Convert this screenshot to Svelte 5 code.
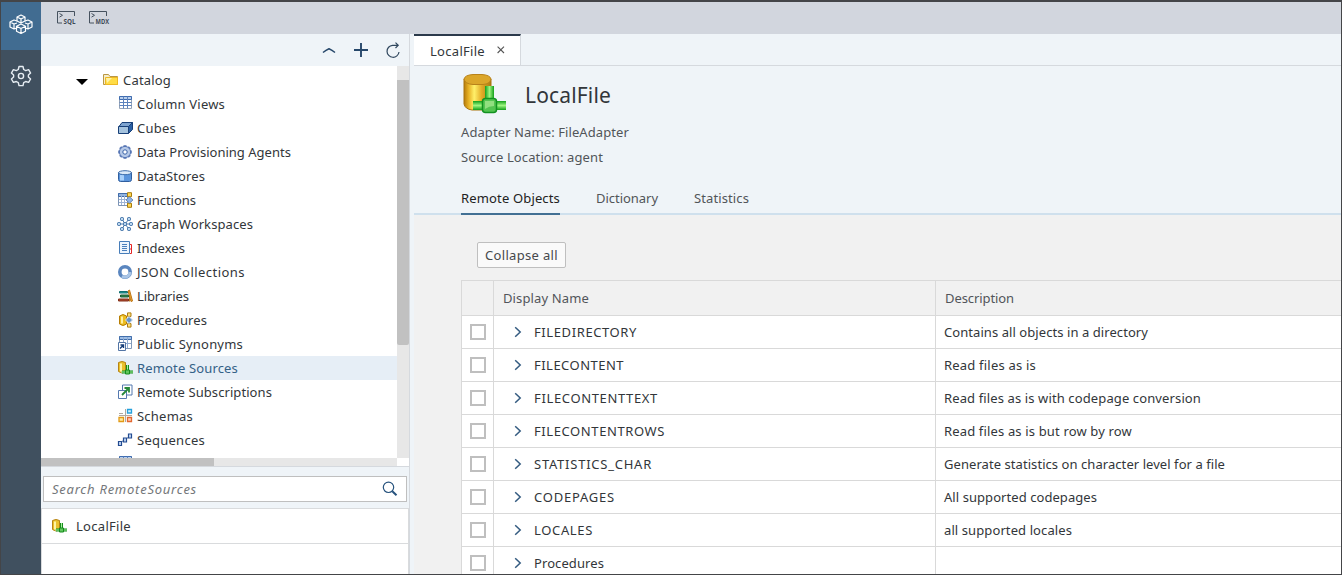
<script>
  const tree = [
    ['table', 'Column Views', 88], ['cube', 'Cubes', 39], ['gear', 'Data Provisioning Agents', 154],
    ['store', 'DataStores', 68], ['func', 'Functions', 59], ['graph', 'Graph Workspaces', 116],
    ['index', 'Indexes', 48], ['json', 'JSON Collections', 108], ['books', 'Libraries', 52],
    ['proc', 'Procedures', 70], ['synonym', 'Public Synonyms', 106], ['remote', 'Remote Sources', 101],
    ['subscribe', 'Remote Subscriptions', 135], ['schema', 'Schemas', 56], ['sequence', 'Sequences', 68], ['table', '', 0]
  ];
  const rows = [
    ['FILEDIRECTORY', 103, 'Contains all objects in a directory', 204],
    ['FILECONTENT', 90, 'Read files as is', 92],
    ['FILECONTENTTEXT', 124, 'Read files as is with codepage conversion', 257],
    ['FILECONTENTROWS', 131, 'Read files as is but row by row', 188],
    ['STATISTICS_CHAR', 118, 'Generate statistics on character level for a file', 281],
    ['CODEPAGES', 81, 'All supported codepages', 153],
    ['LOCALES', 59, 'all supported locales', 128],
    ['Procedures', 70, '', 0]
  ];
  const teeth = [0, 45, 90, 135, 180, 225, 270, 315];

  function fit(node, width) {
    const natural = node.getBoundingClientRect().width;
    node.style.letterSpacing = `${(width - natural) / Math.max(1, node.textContent.length)}px`;
  }
</script>

{#snippet label(text, width)}<span class="label" use:fit={width}>{text}</span>{/snippet}

{#snippet icon(kind)}
  <svg class="icon" viewBox="0 0 16 16" width="16" height="16">
    {#if kind === 'table'}
      <path d="M1.500 .5h12v12h-12z" fill="#fff" stroke="#94a3b8" />
      <path d="M1.500 .5h12v3h-12z" fill="#b9cfec" stroke="#3f6cb0" />
      <path d="M5.500 .5v12M9.500 .5v12M1.500 6.500h12M1.500 9.500h12" fill="none" stroke="#5c82bd" />
    {:else if kind === 'cube'}
      <path d="M1 6.500 4 2.500h10.500l-3.500 4z" fill="#7da3cf" stroke="#173f78" />
      <path d="M10.500 6.500l4-4v7l-4 4z" fill="#2b60a4" stroke="#173f78" />
      <path d="M.5 6.500h10v7h-10z" fill="#a4c2dd" stroke="#173f78" />
    {:else if kind === 'gear'}
      {#each teeth as a}<path d="M5.500 1.200h3v3h-3z" fill="#5b79b5" transform="rotate({a} 7 8)" />{/each}
      <circle cx="7" cy="8" r="5.600" fill="#b6c9e7" stroke="#5575b5" />
      <circle cx="7" cy="8" r="2.200" fill="#fff" stroke="#3962a8" />
    {:else if kind === 'store'}
      <path d="M.5 4.500v7q0 2 2 2h9q2 0 2-2v-7z" fill="#5b95dc" stroke="#2f5e9f" />
      <path d="M2 7v5.500h4V7z" fill="#a8d0fa" />
      <ellipse cx="7" cy="4.700" rx="6.500" ry="2" fill="#dceaf8" stroke="#3d6dab" />
    {:else if kind === 'func'}
      <path d="M.5 1.500h9v12h-9z" fill="#fff" stroke="#7d94b5" />
      <path d="M.5 1.500h9v3h-9z" fill="#8eb3e1" stroke="#416ba9" />
      <path d="M3.500 2v11M6.500 2v11M1 7.500h8M1 10.500h8" stroke="#9db4d6" />
      <path d="M9.500.7h4v4h-4zM9.500 11.300h4v4h-4z" fill="#ffd755" stroke="#a87c0b" />
      <path d="M8 8l3.500-3.200L15 8l-3.500 3.200z" fill="#8fb3e5" stroke="#5b7aaa" stroke-width=".8" />
    {:else if kind === 'graph'}
      <path d="M4 3l3 5 4-5M4 13l3-5 4 5M1 8h12" fill="none" stroke="#4d78aa" />
      {#each [[4, 3], [11, 3], [1, 8], [7, 8], [13, 8], [4, 13], [11, 13]] as p}
        <rect x={p[0] - 1.5} y={p[1] - 1.5} width="3" height="3" rx="1" fill="#bdd7ef" stroke="#3167a0" />
      {/each}
    {:else if kind === 'index'}
      <path d="M1.500 1.500h10v12h-10z" fill="#edf5fd" stroke="#477db9" />
      <path d="M4 4.500h5M4 6.500h5M4 8.500h5M4 10.500h5" stroke="#4b80bd" />
      <path d="M12 4.500h1.500v9H12M12 9h1" fill="none" stroke="#e62525" />
    {:else if kind === 'json'}
      <circle cx="7" cy="8" r="5.200" fill="#fff" stroke="#5a86bf" stroke-width="3.600" />
      <path d="M4 12.300A5.200 5.200 0 0 0 12 8" fill="none" stroke="#a9c5e6" stroke-width="3" />
    {:else if kind === 'books'}
      <path d="M1.500 3.500h8v1.500h-8z" fill="#20a39a" stroke="#126f70" />
      <path d="M2.500 7h8v2h-8z" fill="#318b4c" stroke="#1a5b32" />
      <path d="M.5 11h10v2H.5z" fill="#b04630" stroke="#823018" />
      <path d="M10 3l1.500-1 3 11-1.500.5zM11.500 7v6.500" fill="#efa72c" stroke="#bd771b" />
    {:else if kind === 'proc'}
      <path d="M1.500 4v8q3.500 3 7 0V4q-3.500-3-7 0z" fill="#ecbd20" stroke="#b77e05" />
      <path d="M3 4.500v7h2v-7z" fill="#fff0a0" />
      <path d="M9.500.9h3.500v3.500H9.500zM9.500 11.600h3.500v3.500H9.500z" fill="#ffe27a" stroke="#ad7c13" />
      <path d="M7.500 8l3.500-3.500L14.500 8 11 11.500z" fill="#6695cc" stroke="#dae3ec" />
    {:else if kind === 'synonym'}
      <path d="M1.500 .5h12v12h-12z" fill="#fff" stroke="#8199b8" />
      <path d="M1.500 .5h12v3h-12z" fill="#9dbee7" stroke="#426fac" />
      <path d="M5.500 1v11M9.500 1v11M2 7.500h11" stroke="#8eabd2" />
      <path d="M.5 6.500h7v8h-7z" fill="#fff" stroke="#5375a5" />
      <path d="M2 12.500l3-3M2.500 9H5.500v3" fill="none" stroke="#153e7a" stroke-width="1.400" />
    {:else if kind === 'remote'}
      <path d="M.5 2.500v9q3.500 3 7 0v-9q-3.500-2-7 0z" fill="#eac22c" stroke="#b78314" />
      <path d="M2 3.500v8h2v-8z" fill="#fff4a2" />
      <path d="M9.500 5v7M4 12h11" stroke="#168d1c" stroke-width="3" />
      <path d="M9.500 5v7M3 12h12" stroke="#a8f0a0" />
      <path d="M7.500 10h4v4h-4z" fill="#60c65d" stroke="#168d1c" />
    {:else if kind === 'subscribe'}
      <path d="M4.500 1h9.500v10H4.500z" fill="#fff" stroke="#5579af" />
      <path d="M.5 6.500h8v8h-8z" fill="#fff" stroke="#5579af" />
      <path d="M4 11l7-7M6.500 4H11v4.500" fill="none" stroke="#27883a" stroke-width="1.800" />
    {:else if kind === 'schema'}
      <path d="M7.500 1v13M1 7.500h13M1 5.500h4" stroke="#b0a9a0" />
      <path d="M9.500 1.500h4v3.500h-4z" fill="#d2efff" stroke="#24a0dc" stroke-width="1.300" />
      <path d="M1 9.500h4.500v4H1z" fill="#ffeba5" stroke="#e29a16" stroke-width="1.300" />
      <path d="M9.500 9.500h4v4h-4z" fill="#ffd0b9" stroke="#e36831" stroke-width="1.300" />
    {:else if kind === 'sequence'}
      <path d="M3 10l4-2 5-4" stroke="#6788b6" />
      <path d="M.5 9.500h3v4h-3zM5.500 6h3v4h-3zM10.500 2h3v4h-3z" fill="#c8dcf6" stroke="#234b91" stroke-width="1.200" />
    {/if}
  </svg>
{/snippet}

<div class="app">
  <nav class="rail">
    <div class="rail-item active">
      <svg width="24" height="22" viewBox="0 0 24 22" fill="none" stroke="#fff" stroke-width="1.200" stroke-linejoin="round">
        <path d="M12 1l4 2v4l-4 2-4-2V3zM8 3l4 2 4-2M12 5v4" />
        <path d="M8 7L5 6 1 8v5l4 2 3-1M1 8l4 2 3-1M5 10v5" />
        <path d="M16 7l3-1 4 2v5l-4 2-3-1M23 8l-4 2-3-1M19 10v5" />
        <path d="M12 10l4.500 2.300v5L12 19.500l-4.500-2.200v-5zM7.500 12.300L12 14.500l4.500-2.200M12 14.500v5" />
      </svg>
    </div>
    <div class="rail-item">
      <svg width="22" height="22" viewBox="0 0 22 22" fill="none" stroke="#e6edf3" stroke-width="1.400" stroke-linejoin="round">
        <path d="M9 1.500h4l.7 3 2 1.100 2.900-.9 2 3.400-2.200 2v1.900l2.200 2-2 3.400-2.900-.9-2 1.100-.7 3H9l-.7-3-2-1.100-2.900.9-2-3.400 2.200-2v-1.900l-2.200-2 2-3.400 2.900.9 2-1.100z" />
        <circle cx="11" cy="11" r="2.600" />
      </svg>
    </div>
  </nav>

  <div class="work">
    <header class="toolbar">
      {#each ['SQL', 'MDX'] as name}
        <svg width="22" height="16" viewBox="0 0 22 16">
          <path d="M6 13H1.500V1.500h17V6" fill="none" stroke="#46525f" />
          <path d="M3.500 3.500l3 1.800-3 1.800" fill="none" stroke="#46525f" />
          <text x="7.500" y="13.500" textLength={name === 'SQL' ? 12 : 13.5} lengthAdjust="spacingAndGlyphs">{name}</text>
        </svg>
      {/each}
    </header>

    <div class="body">
      <aside>
        <div class="actions">
          <svg width="16" height="16" viewBox="0 0 16 16"><path d="M2 10.500q3-2.500 6-3.800Q11 8 14 10.500" fill="none" stroke="#26476a" stroke-width="1.500" /></svg>
          <svg width="16" height="16" viewBox="0 0 16 16"><path d="M8 1v14M1 8h14" stroke="#26476a" stroke-width="1.900" /></svg>
          <svg width="16" height="16" viewBox="0 0 16 16" fill="none" stroke="#30475e" stroke-width="1.200"><path d="M13 3.300H7.500A6 6 0 1 0 14 10M10.500 .6l2.700 2.700-2.700 2.700" /></svg>
        </div>
        <div class="scroll">
          <div class="tree">
            <div class="node root">
              <svg class="arrow" width="12" height="6" viewBox="0 0 12 6"><path d="M0 0h12L6 6z" fill="#000" /></svg>
              <svg width="16" height="14" viewBox="0 0 16 14">
                <path d="M.5 11.500v-10h5l1.500 2h7.500v8z" fill="#f5edcc" stroke="#b99745" />
                <path d="M2.500 4.500h12v7h-12z" fill="#ffdc45" stroke="#eeb823" />
                <path d="M3 5h6l-5 5z" fill="#fff2a8" />
              </svg>
              {@render label('Catalog', 48)}
            </div>
            {#each tree as [kind, text, width]}
              <div class="node" class:selected={kind === 'remote'}>{@render icon(kind)}{#if text}{@render label(text, width)}{/if}</div>
            {/each}
          </div>
          <div class="vbar"><div class="vthumb"></div></div>
          <div class="hbar"><div class="hthumb"></div></div>
        </div>
        <div class="search">
          <div class="input">
            <em>{@render label('Search RemoteSources', 145)}</em>
            <svg width="16" height="16" viewBox="0 0 16 16" fill="none" stroke="#26527d"><circle cx="6.500" cy="6.300" r="5.200" stroke-width="1.200" /><path d="M10.300 10.300l4.200 4" stroke-width="2" /></svg>
          </div>
        </div>
        <div class="results"><div class="result">{@render icon('remote')}{@render label('LocalFile', 55)}</div></div>
      </aside>

      <main>
        <div class="tabs">
          <div class="tab">
            {@render label('LocalFile', 55)}
            <svg width="8" height="8" viewBox="0 0 8 8"><path d="M.6.6l6.400 6.400M7 .6L.6 7" stroke="#555" stroke-width="1.100" /></svg>
          </div>
        </div>
        <section class="summary">
          <div class="title">
            <svg width="46" height="42" viewBox="0 0 46 42">
              <defs>
                <linearGradient id="gold"><stop offset="0" stop-color="#b57b0c" /><stop offset=".16" stop-color="#e5ae22" /><stop offset=".38" stop-color="#fff06a" /><stop offset=".65" stop-color="#e3ad27" /><stop offset="1" stop-color="#a97913" /></linearGradient>
                <linearGradient id="greenV"><stop offset="0" stop-color="#129f1a" /><stop offset=".5" stop-color="#9df580" /><stop offset="1" stop-color="#129f1a" /></linearGradient>
                <linearGradient id="greenH" x2="0" y2="1"><stop offset="0" stop-color="#129f1a" /><stop offset=".5" stop-color="#9df580" /><stop offset="1" stop-color="#129f1a" /></linearGradient>
              </defs>
              <path d="M3 5v25q1 5 8 6h10q8-1 9-6V5z" fill="url(#gold)" stroke="#a9740d" />
              <path d="M3 5q1-4 9-4.500h9q8 .5 9 4.500-1 5-8 5.500H12Q4 10 3 5z" fill="#dba62a" stroke="#b8821a" />
              <path d="M24 12h9v15h-9z" fill="url(#greenV)" />
              <path d="M12 27h33v9H12z" fill="url(#greenH)" />
              <rect x="21.500" y="24.500" width="14" height="14" rx="3" fill="#54c451" stroke="#139221" stroke-width="1.500" />
              <path d="M24 27h9v5q-5 0-9 3z" fill="#92df80" />
            </svg>
            <h1>{@render label('LocalFile', 86)}</h1>
          </div>
          <p>{@render label('Adapter Name: FileAdapter', 168)}</p>
          <p>{@render label('Source Location: agent', 142)}</p>
          <div class="sections">
            <span class="current">{@render label('Remote Objects', 99)}</span>
            <span>{@render label('Dictionary', 62)}</span>
            <span>{@render label('Statistics', 55)}</span>
          </div>
        </section>
        <section class="content">
          <button>{@render label('Collapse all', 73)}</button>
          <div class="grid">
            <div class="row head"><div></div><div class="name">{@render label('Display Name', 86)}</div><div class="desc">{@render label('Description', 69)}</div></div>
            {#each rows as [name, nw, desc, dw]}
              <div class="row">
                <div class="check"><i></i></div>
                <div class="name">
                  <svg width="8" height="12" viewBox="0 0 8 12"><path d="M1.200 1.200L6.200 6l-5 4.800" fill="none" stroke="#345b80" stroke-width="1.500" /></svg>
                  {@render label(name, nw)}
                </div>
                <div class="desc">{#if desc}{@render label(desc, dw)}{/if}</div>
              </div>
            {/each}
          </div>
        </section>
      </main>
    </div>
  </div>
</div>

<style>
  * { box-sizing: border-box; }
  svg { display: block; flex: none; overflow: visible; }
  .app { display: flex; width: 1342px; height: 575px; overflow: hidden; border: 1px solid #444548; border-top-width: 2px; background: #eff4f8; font: 13px/20px "Noto Sans", "Open Sans", sans-serif; color: #32363a; }
  .label { white-space: nowrap; display: inline-block; }
  .rail { width: 40px; background: #40505f; flex: none; }
  .rail-item { height: 48px; display: flex; align-items: center; justify-content: center; }
  .rail-item + .rail-item { height: 52px; }
  .rail-item.active { background: #416c91; padding-bottom: 2px; }
  .work { flex: 1; min-width: 0; display: flex; flex-direction: column; }
  .toolbar { height: 32px; flex: none; background: #d2d6de; display: flex; align-items: center; gap: 10px; padding-left: 15px; }
  .toolbar text { font: bold 7px "Open Sans", sans-serif; fill: #3e4a57; }
  .body { flex: 1; min-height: 0; display: flex; }
  aside { width: 369px; flex: none; display: flex; flex-direction: column; border-right: 1px solid #d5d9de; }
  .actions { height: 32px; flex: none; display: flex; justify-content: flex-end; align-items: center; gap: 16px; padding-right: 8px; }
  .scroll { height: 401px; flex: none; display: grid; grid-template: 392px 8px / 1fr 12px; background: #fff; border-bottom: 1px solid #d5d9de; }
  .tree { overflow: hidden; padding-top: 2px; }
  .node { height: 24px; display: flex; align-items: center; gap: 3px; padding-left: 77px; }
  .root { padding-left: 35px; gap: 4px; }
  .arrow { margin-right: 11px; margin-top: 3px; }
  .selected { background: #e6eef6; color: #346187; }
  .vbar, .hbar { background: #e7e7e7; }
  .vbar { padding-top: 14px; }
  .vthumb { height: 265px; background: #c1c1c1; border-radius: 0 0 2px 2px; }
  .hthumb { width: 173px; height: 8px; background: #c1c1c1; }
  .search { height: 41px; flex: none; padding: 9px 2px 0; }
  .input { height: 26px; border: 1px solid #bfbfbf; background: #fff; display: flex; align-items: center; justify-content: space-between; padding: 0 8px; color: #74777a; }
  .results { flex: 1; background: #fff; border: 1px solid #d9dbdd; border-bottom: 0; }
  .result { height: 35px; border-bottom: 1px solid #d9dbdd; display: flex; align-items: center; gap: 8px; padding: 0 0 1px 10px; }
  main { flex: 1; min-width: 0; margin-left: 4px; display: flex; flex-direction: column; }
  .tabs { height: 32px; flex: none; border-bottom: 1px solid #d5d9de; }
  .tab { width: 107px; height: 31px; display: flex; align-items: center; gap: 12px; padding-left: 16px; background: #fff; border-top: 2px solid #2b3a4b; border-right: 1px solid #d5d9de; }
  .tab svg { margin-bottom: 2px; }
  .summary { height: 149px; flex: none; padding: 6px 0 0 47px; border-bottom: 2px solid #cfe0ed; display: flex; flex-direction: column; }
  .title { display: flex; align-items: center; height: 45px; gap: 18px; }
  h1 { font-size: 21px; line-height: 30px; font-weight: 400; margin: 0; }
  p { margin: 5px 0 0; line-height: 20px; color: #515559; }
  .sections { display: flex; gap: 36px; margin: 21px 0 -2px; color: #515559; }
  .sections span { height: 27px; display: block; }
  .sections .current { border-bottom: 2px solid #427094; color: #222; }
  .content { flex: 1; min-height: 0; overflow: hidden; background: #f1f1f1; padding: 27px 0 0 47px; }
  button { display: block; margin: 0 0 12px 16px; width: 89px; height: 26px; padding: 0; border: 1px solid #bfbfbf; border-radius: 2px; background: #fafafa; color: #46494c; font: inherit; }
  .grid { border-top: 1px solid #d9d9d9; border-left: 1px solid #d9d9d9; }
  .row { display: grid; grid-template-columns: 31px 442px 1fr; height: 33px; border-bottom: 1px solid #d9d9d9; background: #fff; }
  .row > div { display: flex; align-items: center; }
  .row > div + div { border-left: 1px solid #d9d9d9; }
  .head { height: 35px; background: #f1f1f1; color: #51555a; }
  .row .check { padding-left: 8px; }
  .check i { width: 16px; height: 16px; flex: none; border: 2px solid #bfbfbf; background: #fff; }
  .row .name { padding-left: 20px; gap: 12px; }
  .row .desc { padding-left: 8px; }
  .head .name, .head .desc { padding-left: 9px; }
</style>
